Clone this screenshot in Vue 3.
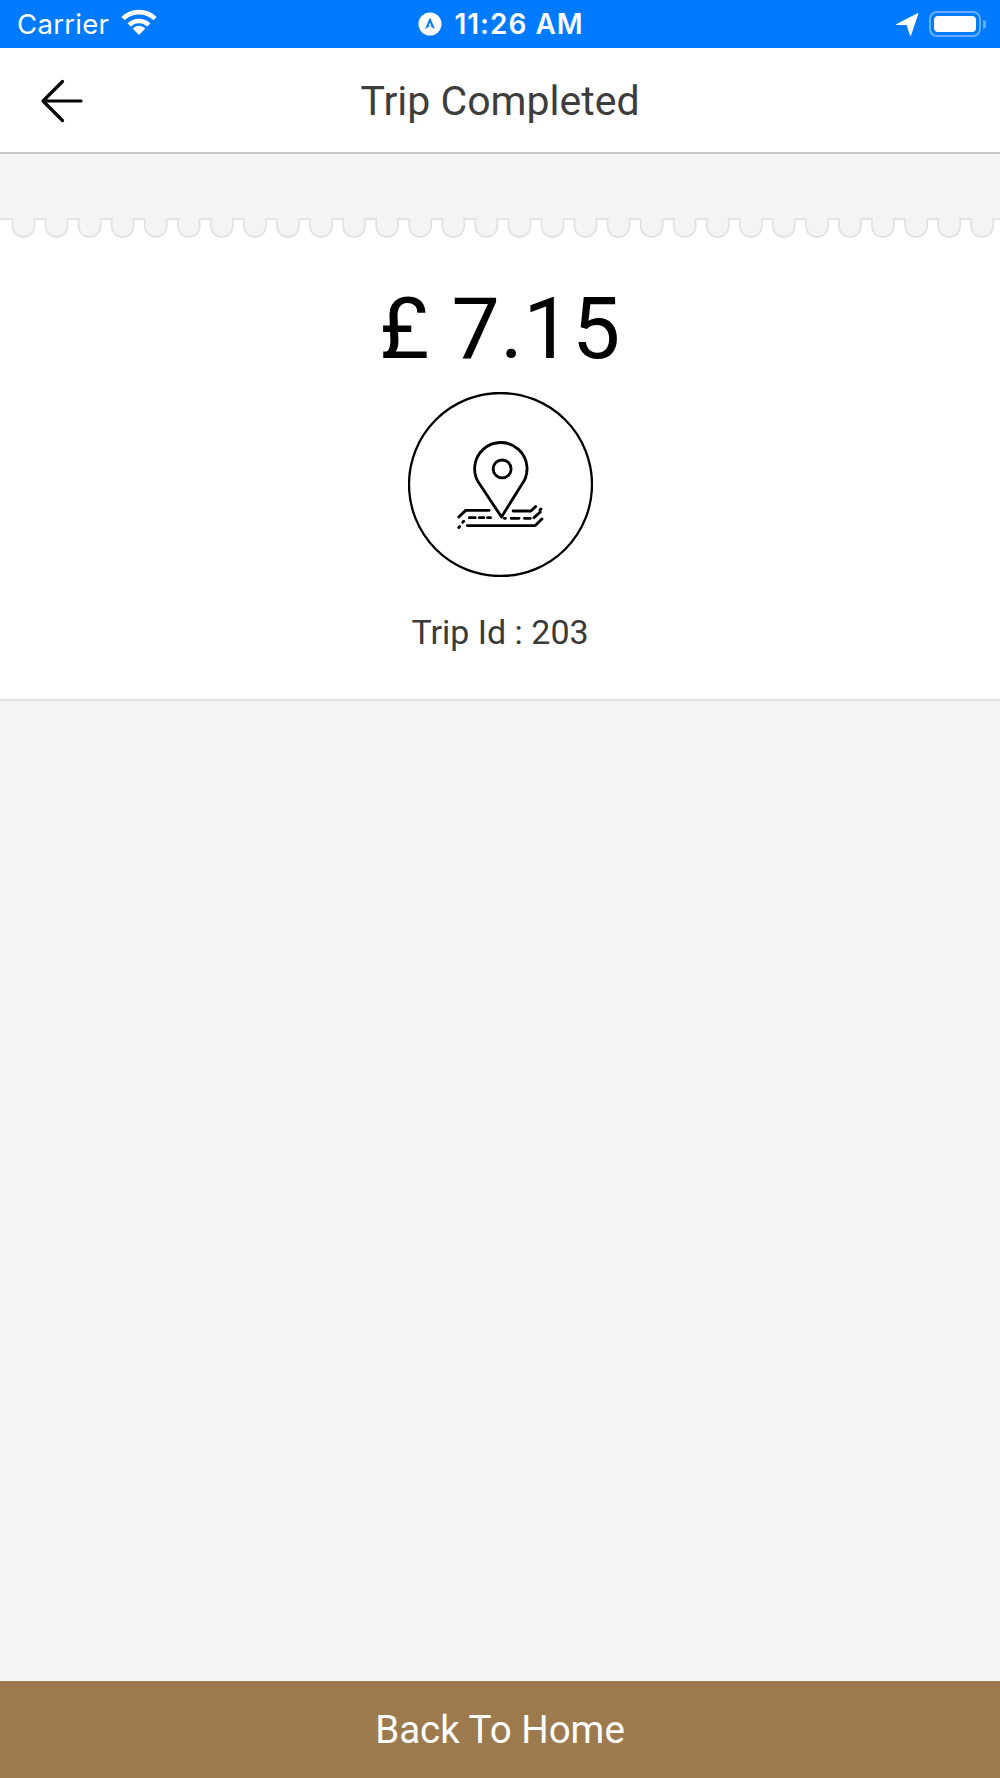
<template>
  <div class="page">
    <div class="status-bar">
      <div class="status-left">
        <span class="carrier">Carrier</span>
        <svg class="wifi" width="38" height="28" viewBox="0 0 38 28">
          <path d="M19 27 L12.6 20.4 A9 9 0 0 1 25.4 20.4 Z" fill="#fff" />
          <path d="M9.2 17 A14 14 0 0 1 28.8 17" fill="none" stroke="#fff" stroke-width="4.6" />
          <path d="M3 10.6 A23 23 0 0 1 35 10.6" fill="none" stroke="#fff" stroke-width="4.6" />
        </svg>
      </div>
      <div class="status-center">
        <svg width="24" height="24" viewBox="0 0 24 24">
          <circle cx="12" cy="12" r="11.5" fill="#fff" />
          <path d="M12 5.5 L17 17 L12 14 L7 17 Z" fill="#007aff" />
          <path d="M12 10.5 L13.6 14.4 L12 13.4 L10.4 14.4 Z" fill="#fff" />
        </svg>
        <span class="time">11:26 AM</span>
      </div>
      <div class="status-right">
        <svg width="24" height="24" viewBox="0 0 24 24">
          <path d="M1.5 12.5 L23 1.5 L15.5 23.5 L12 12.5 Z" fill="#fff" stroke="#fff" stroke-width="1" stroke-linejoin="round" />
        </svg>
        <div class="battery"><div class="battery-fill"></div></div>
        <div class="battery-nub"></div>
      </div>
    </div>

    <div class="nav">
      <svg class="back" width="44" height="44" viewBox="0 0 44 44">
        <path d="M22.5 2.5 L3 22 L22.5 41.5 M3 22 H41" fill="none" stroke="#000" stroke-width="3.2" stroke-linecap="round" stroke-linejoin="round" />
      </svg>
      <span class="nav-title">Trip Completed</span>
    </div>

    <div class="gap"></div>

    <div class="receipt">
      <svg class="scallop" width="1000" height="20" viewBox="0 0 1000 20">
        <path :d="scallopPath + ' V-2 H-2 Z'" fill="#f4f4f4" />
        <path :d="scallopPath" fill="none" stroke="#e3e3e3" stroke-width="1.8" />
      </svg>
      <div class="amount">£ 7.15</div>
      <svg class="trip-icon" width="185" height="185" viewBox="51 33 558 558">
        <circle cx="330" cy="312" r="276" fill="none" stroke="#000" stroke-width="7" />
        <g fill="none" stroke="#000" stroke-width="8.5" stroke-linecap="round" stroke-linejoin="round">
          <path d="M333 410 L268 312 A79 79 0 1 1 394 312 Z" />
          <circle cx="335" cy="265" r="27" />
          <path d="M204 410 L225 390 H296" />
          <path d="M368 392 H422 L436 378" />
          <path d="M449 389 L452 386" />
          <path d="M216 426 L219 423" />
          <path d="M204 442 L207 439" />
          <path d="M236 412 H254 M266 412 H280 M291 412 H300" />
          <path d="M341 414 H345 M362 414 H386 M402 414 H420 M431 412 L450 395" />
          <path d="M230 436 H435 L455 416" />
        </g>
      </svg>
      <div class="trip-id">Trip Id : 203</div>
    </div>

    <div class="spacer"></div>

    <div class="home-btn">Back To Home</div>
  </div>
</template>

<script setup>
import { computed } from 'vue'

// row of lobes along the top edge of the receipt
const scallopPath = computed(() => {
  const pitch = 33.06
  let d = 'M-2 1'
  for (let i = 0; i < 31; i++) {
    const left = 12.5 + pitch * i
    d += ` H${left} V8 A11 11 0 0 0 ${left + 22} 8 V1`
  }
  return d + ' H1002'
})
</script>

<style>
html, body { margin: 0; background: #f4f4f4; }
</style>

<style scoped>
.page {
  width: 1000px;
  height: 1778px;
  display: flex;
  flex-direction: column;
  background: #f4f4f4;
  font-family: Roboto, 'Liberation Sans', sans-serif;
}

.status-bar {
  height: 48px;
  flex: none;
  background: #007aff;
  color: #fff;
  display: grid;
  grid-template-columns: 1fr auto 1fr;
  align-items: center;
  padding: 0 14px 0 17px;
  box-sizing: border-box;
}
.status-left { display: flex; align-items: center; gap: 11px; }
.carrier { font-family: Inter, sans-serif; font-size: 27.5px; letter-spacing: 0.3px; }
.wifi { margin-top: -4px; }
.status-center { display: flex; align-items: center; gap: 12px; margin-left: -1px; }
.time { font-family: Inter, sans-serif; font-size: 28px; font-weight: 600; letter-spacing: 1px; }
.status-right { display: flex; align-items: center; justify-content: flex-end; }
.battery {
  width: 52px;
  height: 26px;
  box-sizing: border-box;
  margin-left: 10px;
  padding: 3px;
  border: 2px solid rgba(255, 255, 255, 0.4);
  border-radius: 8px;
}
.battery-fill { height: 100%; background: #fff; border-radius: 4px; }
.battery-nub {
  width: 3px;
  height: 9px;
  margin-left: 2px;
  background: rgba(255, 255, 255, 0.4);
  border-radius: 0 3px 3px 0;
}

.nav {
  height: 106px;
  flex: none;
  box-sizing: border-box;
  background: #fff;
  border-bottom: 2.5px solid #c6c6c6;
  display: flex;
  align-items: center;
  justify-content: center;
  position: relative;
}
.back { position: absolute; left: 40px; top: 31px; }
.nav-title { font-size: 41px; color: #3d3d3d; margin-top: 1px; }

.gap { height: 64px; flex: none; }

.receipt {
  height: 483px;
  flex: none;
  box-sizing: border-box;
  background: #fff;
  border-bottom: 2px solid #e3e3e3;
  display: flex;
  flex-direction: column;
  align-items: center;
}
.scallop { display: block; overflow: visible; flex: none; }
.amount {
  margin-top: 39px;
  font-size: 86px;
  line-height: 103px;
  color: #000;
  letter-spacing: 0.4px;
}
.trip-icon { display: block; margin-top: 12px; flex: none; }
.trip-id { margin-top: 36px; font-size: 34px; line-height: 38px; color: #3a3a3a; }

.spacer { flex: 1; }

.home-btn {
  height: 97px;
  flex: none;
  background: #9c7a4d;
  color: #fff;
  display: flex;
  align-items: center;
  justify-content: center;
  font-size: 38.5px;
}
</style>
